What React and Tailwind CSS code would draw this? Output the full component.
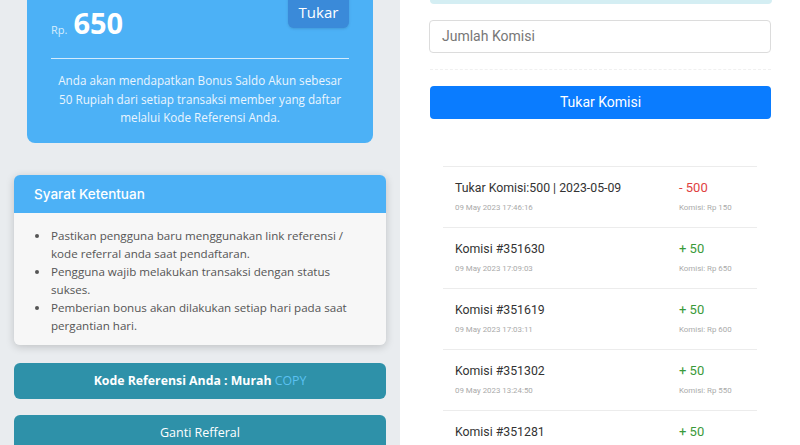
import React from "react";

const rows = [
  { title: "Tukar Komisi:500 | 2023-05-09", date: "09 May 2023 17:46:16", amount: "- 500", neg: true, sub: "Komisi: Rp 150" },
  { title: "Komisi #351630", date: "09 May 2023 17:09:03", amount: "+ 50", sub: "Komisi: Rp 650" },
  { title: "Komisi #351619", date: "09 May 2023 17:03:11", amount: "+ 50", sub: "Komisi: Rp 600" },
  { title: "Komisi #351302", date: "09 May 2023 13:24:50", amount: "+ 50", sub: "Komisi: Rp 550" },
  { title: "Komisi #351281", date: "09 May 2023 13:10:42", amount: "+ 50", sub: "Komisi: Rp 500" },
];

export default function App() {
  return (
    <div className="flex w-[800px] h-[445px] overflow-hidden bg-white">
      {/* left column */}
      <div className="w-[400px] h-full bg-[#e9ecef] flex flex-col" style={{ fontFamily: '"Open Sans", sans-serif' }}>
        <div className="mx-[27px] w-[346px] h-[143px] bg-[#4cb1f6] rounded-b-lg px-[24px] shrink-0">
          <div className="flex justify-between items-start h-[59px] border-b border-[#d3ebfd]">
            <div className="flex items-baseline mt-[5px]">
              <span className="text-[11px] text-[#d6edfd] mr-[6px]">Rp.</span>
              <span className="text-[29px] font-bold text-white leading-[36px]">650</span>
            </div>
            <button className="w-[61px] h-[38px] -mt-[10px] bg-[#3a8ad9] rounded-md text-white text-[15px] leading-none pt-[6px] shadow-sm">
              Tukar
            </button>
          </div>
          <p className="text-center text-[11.7px] leading-[18.5px] text-[#eaf5fe] pt-[12px]">
            Anda akan mendapatkan Bonus Saldo Akun sebesar 50 Rupiah dari setiap transaksi member yang daftar melalui Kode Referensi Anda.
          </p>
        </div>

        <div className="mx-[14px] mt-[32px] rounded-md shadow-[0_2px_8px_rgba(0,0,0,0.18)] overflow-hidden shrink-0">
          <div className="h-[38px] bg-[#4cb1f6] flex items-center px-[20px]">
            <span className="text-white text-[13.5px] font-medium" style={{ fontFamily: 'Inter, "Noto Sans", sans-serif' }}>Syarat Ketentuan</span>
          </div>
          <ul className="bg-[#f7f7f7] pt-[14px] pb-[10px] pl-[36px] pr-[20px] text-[11.6px] leading-[18px] text-[#555] list-disc">
            <li className="pl-[1px]">Pastikan pengguna baru menggunakan link referensi / kode referral anda saat pendaftaran.</li>
            <li className="pl-[1px]">Pengguna wajib melakukan transaksi dengan status sukses.</li>
            <li className="pl-[1px]">Pemberian bonus akan dilakukan setiap hari pada saat pergantian hari.</li>
          </ul>
        </div>

        <button className="mx-[14px] mt-[18px] h-[36px] bg-[#2e91a9] rounded-md text-white text-[12.3px] font-bold shrink-0">
          Kode Referensi Anda : Murah <span className="font-normal text-[#5cc1f2]">COPY</span>
        </button>
        <button className="mx-[14px] mt-[16px] h-[36px] bg-[#2e91a9] rounded-md text-white text-[12.5px] shrink-0">
          Ganti Refferal
        </button>
      </div>

      {/* right column */}
      <div className="w-[400px] h-full bg-white" style={{ fontFamily: 'Roboto, sans-serif' }}>
        <div className="ml-[30px] w-[342px] h-[4px] bg-[#d4eef3] rounded-b" />
        <div className="ml-[29px] mt-[16px] w-[342px] h-[33px] border border-[#dcdcdc] rounded flex items-center px-[12px] text-[14px] text-[#777]">
          Jumlah Komisi
        </div>
        <div className="ml-[30px] mt-[16px] w-[341px] border-t border-dashed border-[#f0f0f0]" />
        <button className="ml-[30px] mt-[16px] w-[341px] h-[33px] bg-[#0a7cff] rounded text-white text-[14px]">
          Tukar Komisi
        </button>
        <div className="ml-[43px] mt-[47px] w-[314px]">
          {rows.map((r, i) => (
            <div key={i} className="h-[61px] border-t border-[#ececec] flex pl-[12px]">
              <div className="w-[224px]">
                <div className="text-[12.3px] text-[#333] mt-[12px] leading-[18px]">{r.title}</div>
                <div className="text-[7.9px] text-[#aaa] mt-[6px] leading-[10px]">{r.date}</div>
              </div>
              <div>
                <div className={"text-[13px] mt-[12px] leading-[18px] " + (r.neg ? "text-[#e0413f]" : "text-[#3a9a3a]")}>{r.amount}</div>
                <div className="text-[7.9px] text-[#aaa] mt-[6px] leading-[10px]">{r.sub}</div>
              </div>
            </div>
          ))}
        </div>
      </div>
    </div>
  );
}
